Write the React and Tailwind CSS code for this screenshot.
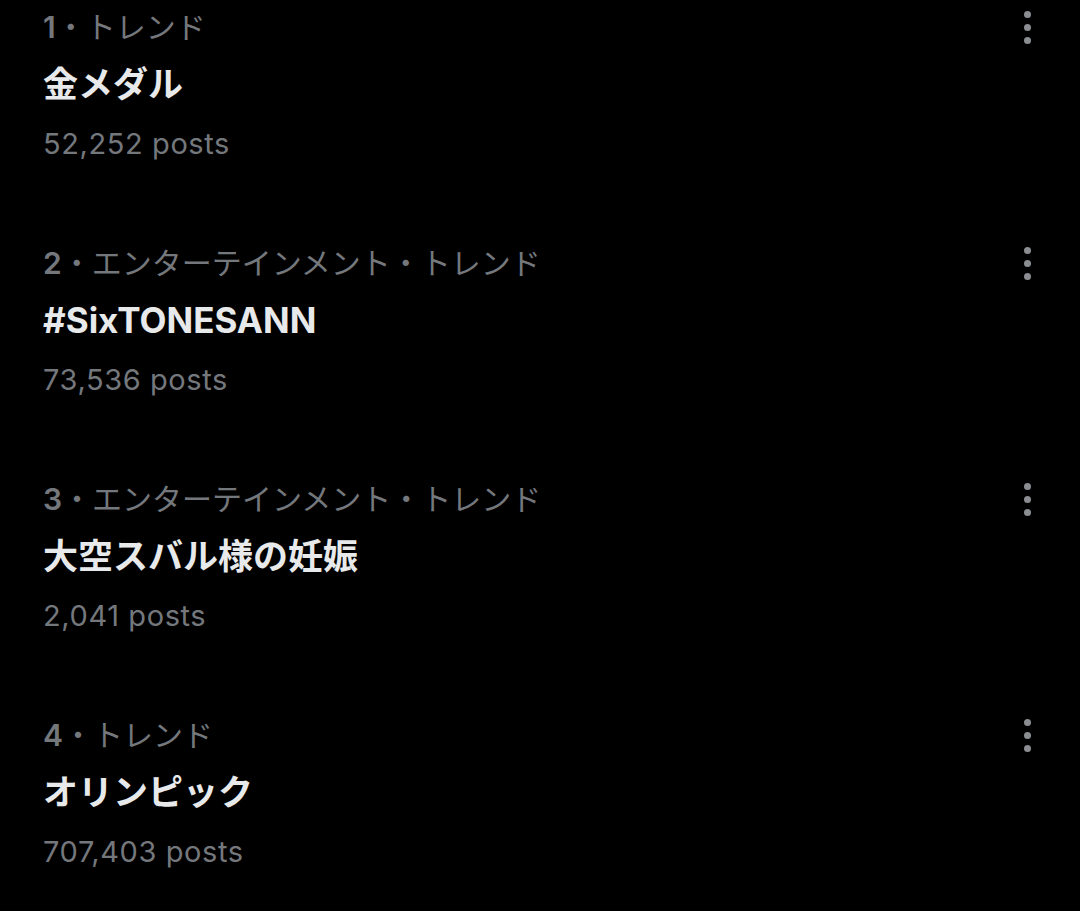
import React from "react";

const trends = [
  { rank: "1", cat: "トレンド", title: "金メダル", posts: "52,252 posts" },
  { rank: "2", cat: "エンターテインメント・トレンド", title: "#SixTONESANN", posts: "73,536 posts" },
  { rank: "3", cat: "エンターテインメント・トレンド", title: "大空スバル様の妊娠", posts: "2,041 posts" },
  { rank: "4", cat: "トレンド", title: "オリンピック", posts: "707,403 posts" },
];

function Dots() {
  return (
    <div className="flex flex-col items-center gap-[6px]">
      <span className="block w-[7px] h-[7px] rounded-full bg-[#8a8d91]" />
      <span className="block w-[7px] h-[7px] rounded-full bg-[#8a8d91]" />
      <span className="block w-[7px] h-[7px] rounded-full bg-[#8a8d91]" />
    </div>
  );
}

export default function App() {
  return (
    <div
      className="w-[1080px] h-[911px] bg-black overflow-hidden"
      style={{ fontFamily: '"Inter", "Noto Sans CJK JP", sans-serif' }}
    >
      {trends.map((t) => (
        <div key={t.rank} className="pl-[43px] pr-[49px] pb-[62px]">
          <div className="flex justify-between items-center h-[54px]">
            <div className="text-[30px] leading-[54px] text-[#74787d]">
              <span className="font-semibold">{t.rank}</span>
              <span>・{t.cat}</span>
            </div>
            <Dots />
          </div>
          <div className="h-[60px] flex items-center text-[35px] font-bold text-[#e7e9ea]">
            {t.title}
          </div>
          <div className="h-[60px] flex items-center text-[29px] tracking-[0.6px] text-[#74787d]">
            {t.posts}
          </div>
        </div>
      ))}
    </div>
  );
}
